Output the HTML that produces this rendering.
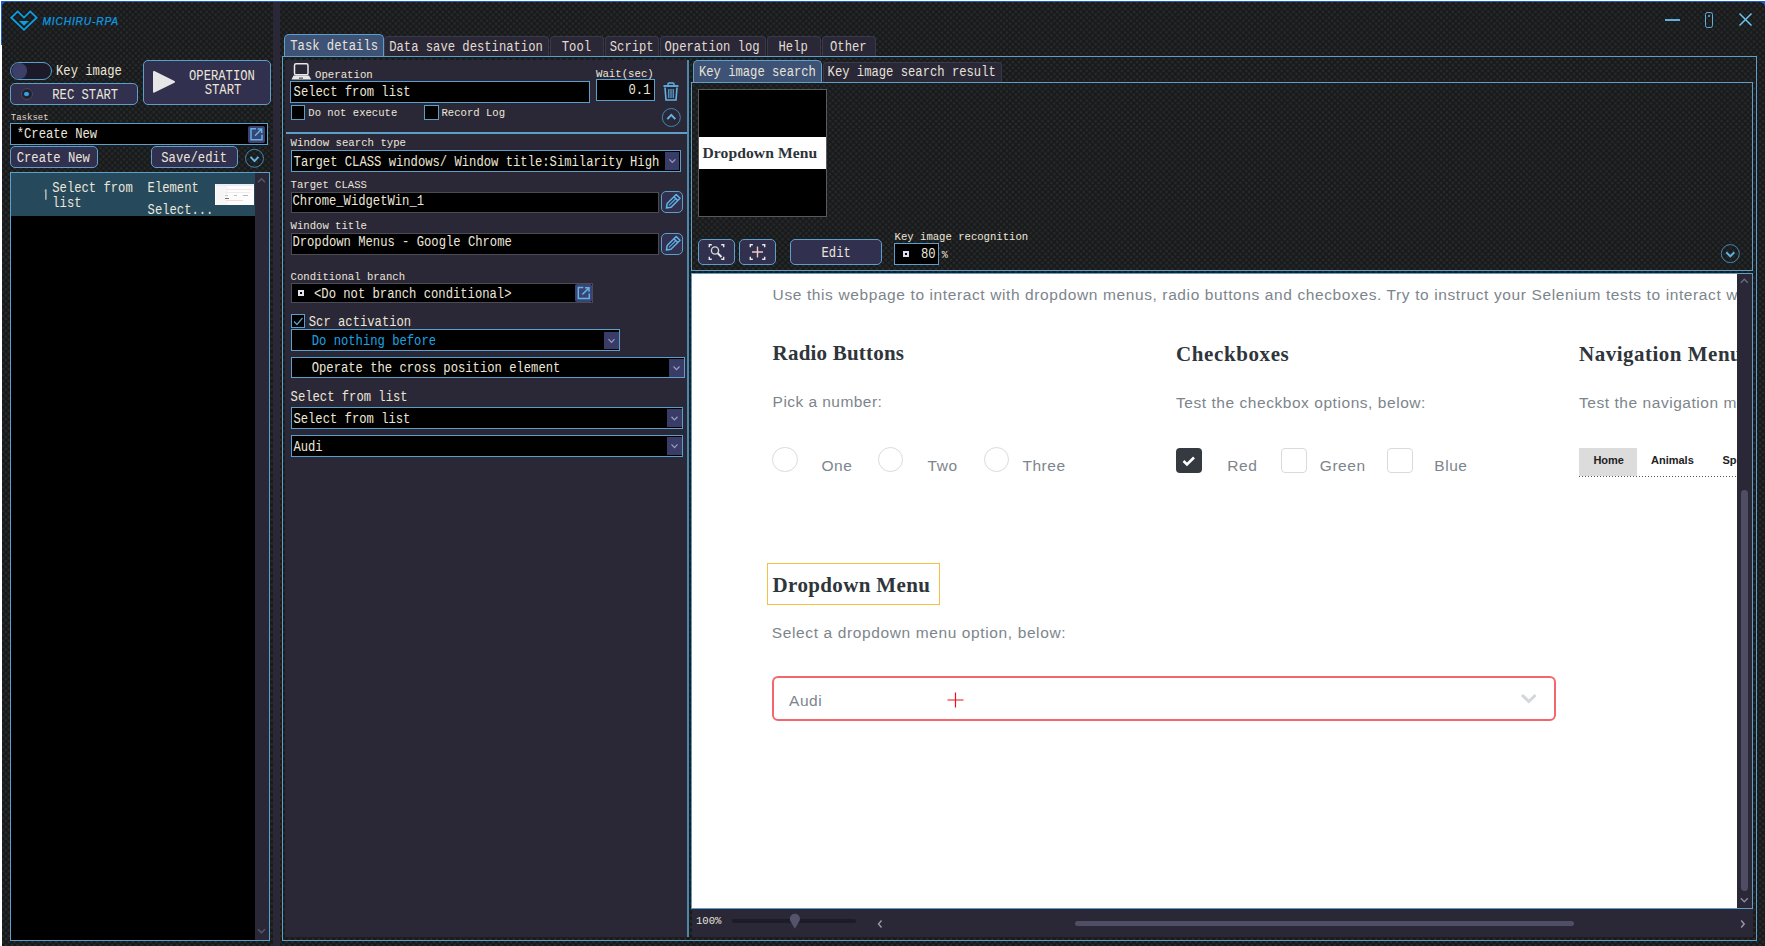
<!DOCTYPE html>
<html><head><meta charset="utf-8">
<style>
*{box-sizing:border-box;margin:0;padding:0}
html,body{width:1765px;height:946px;overflow:hidden}
body{position:relative;background-color:#181818;
background-image:radial-gradient(circle at 2.96px 2.96px,#272b2e 0,#262a2d 0.9px,rgba(24,24,24,0) 2px),radial-gradient(circle at 2.96px 2.96px,#272b2e 0,#262a2d 0.9px,rgba(24,24,24,0) 2px);
background-size:5.92px 5.92px,5.92px 5.92px;background-position:0 0,2.96px 2.96px;
font-family:"Liberation Mono",monospace;color:#ece6da}
.a{position:absolute}
svg.a{overflow:visible}
</style></head><body>
<div class="a" style="left:0px;top:0px;width:1765px;height:1px;background:#fff"></div>
<div class="a" style="left:0px;top:1px;width:1765px;height:1px;background:#1b5ccf"></div>
<div class="a" style="left:0px;top:0px;width:1px;height:946px;background:#fff"></div>
<div class="a" style="left:1px;top:45px;width:1px;height:901px;background:#fff"></div>
<div class="a" style="left:1px;top:1px;width:1px;height:44px;background:#1b5ccf"></div>
<svg class="a" style="left:2px;top:2px" width="6" height="6" viewBox="2 2 6 6"><path d="M2 2 L6.5 2 A4.5 4.5 0 0 0 2 6.5 Z" fill="#1b5ccf"/></svg>
<svg class="a" style="left:1757px;top:2px" width="8" height="8" viewBox="1757 2 8 8"><path d="M1765 2 L1759.5 2 A5.5 5.5 0 0 1 1765 7.5 Z" fill="#1b5ccf"/></svg>
<svg class="a" style="left:9px;top:9px" width="30" height="24" viewBox="0 0 30 24">
<path d="M2.3 8.7 L8.7 2.4 L15 8.6 L21.3 2.4 L27.7 8.7 L15 20.8 Z" fill="none" stroke="#0c9fe6" stroke-width="1.8" stroke-linejoin="miter"/>
<path d="M10 12 L20 12 L15 16.8 Z" fill="#0c9fe6"/>
</svg>
<div class="a" style="left:42.50px;top:16px;font-family:'Liberation Sans',sans-serif;font-size:10.2px;line-height:11px;color:#0c9be2;white-space:pre;font-style:italic;letter-spacing:0.85px;-webkit-text-stroke:0.25px #0c9be2">MICHIRU-RPA</div>
<div class="a" style="left:1665px;top:18.5px;width:15px;height:2.0px;background:#5fb0df"></div>
<div class="a" style="left:1704.5px;top:12px;width:8.5px;height:15.5px;border:1.5px solid #5fb0df;border-radius:2.5px"></div>
<div class="a" style="left:1707.5px;top:14.5px;width:2.5px;height:2.5px;background:#5fb0df;border-radius:1px"></div>
<svg class="a" style="left:1738px;top:12px" width="15" height="15" viewBox="0 0 15 15"><path d="M1.5 1.5 L13.5 13.5 M13.5 1.5 L1.5 13.5" stroke="#6cc3ef" stroke-width="1.5"/></svg>
<div class="a" style="left:273px;top:2px;width:7px;height:944px;background:#2a2837"></div>
<div class="a" style="left:10px;top:61.5px;width:42px;height:18.5px;border:1.5px solid #5c9fca;border-radius:9.5px;background:#1c1a28"></div>
<div class="a" style="left:11.5px;top:63px;width:15.5px;height:15.5px;border-radius:50%;background:#3c4069"></div>
<div class="a" style="left:56.00px;top:65px;font-family:'Liberation Mono',monospace;font-size:12.2px;line-height:14px;color:#ece6da;white-space:pre;transform:scaleY(1.17);transform-origin:0 10px;">Key image</div>
<div class="a" style="left:10px;top:83px;width:128px;height:22px;border:1.5px solid #5c9fca;border-radius:5px;background:#31304e"></div>
<div class="a" style="left:20.5px;top:87.7px;width:12.2px;height:12.2px;border-radius:50%;border:1.5px solid #4a4a55;background:#232233"></div>
<div class="a" style="left:24.3px;top:91.5px;width:4.6px;height:4.6px;border-radius:50%;background:#2fa6e8"></div>
<div class="a" style="left:52.30px;top:89px;font-family:'Liberation Mono',monospace;font-size:12.2px;line-height:14px;color:#ece6da;white-space:pre;transform:scaleY(1.17);transform-origin:0 10px;">REC START</div>
<div class="a" style="left:143px;top:60px;width:128px;height:45px;border:1.5px solid #5c9fca;border-radius:5px;background:#31304e"></div>
<svg class="a" style="left:150px;top:68px" width="30" height="28" viewBox="150 68 30 28"><path d="M154 72 L174 81.8 L154 91.7 Z" fill="#e6e6e8" stroke="#e6e6e8" stroke-width="2" stroke-linejoin="round"/></svg>
<div class="a" style="left:189.00px;top:70px;font-family:'Liberation Mono',monospace;font-size:12.2px;line-height:14px;color:#ece6da;white-space:pre;transform:scaleY(1.17);transform-origin:0 10px;">OPERATION</div>
<div class="a" style="left:204.70px;top:84px;font-family:'Liberation Mono',monospace;font-size:12.2px;line-height:14px;color:#ece6da;white-space:pre;transform:scaleY(1.17);transform-origin:0 10px;">START</div>
<div class="a" style="left:10.80px;top:113px;font-family:'Liberation Mono',monospace;font-size:9px;line-height:10px;color:#e0d8cc;white-space:pre;">Taskset</div>
<div class="a" style="left:10px;top:123px;width:258px;height:22px;border:1px solid #5c9fca;background:#000"></div>
<div class="a" style="left:16.70px;top:128px;font-family:'Liberation Mono',monospace;font-size:12.2px;line-height:14px;color:#ece6da;white-space:pre;transform:scaleY(1.17);transform-origin:0 10px;">*Create New</div>
<div class="a" style="left:248px;top:126px;width:17px;height:16.5px;background:#3b4373;border-radius:2px"></div>
<svg class="a" style="left:248px;top:126px" width="17" height="16.5" viewBox="248 126 17 16.5"><path d="M256.0 128.75 L251.0 128.75 L251.0 139.75 L262.0 139.75 L262.0 134.75" fill="none" stroke="#5fb3e6" stroke-width="1.5"/><path d="M255.0 135.75 L261.7 129.05 M257.7 129.05 L261.7 129.05 L261.7 133.05" fill="none" stroke="#5fb3e6" stroke-width="1.5"/></svg>
<div class="a" style="left:10px;top:146px;width:88px;height:22px;border:1.5px solid #5c9fca;border-radius:5px;background:#31304e"></div>
<div class="a" style="left:16.70px;top:152px;font-family:'Liberation Mono',monospace;font-size:12.2px;line-height:14px;color:#ece6da;white-space:pre;transform:scaleY(1.17);transform-origin:0 10px;">Create New</div>
<div class="a" style="left:151px;top:146px;width:87px;height:22px;border:1.5px solid #5c9fca;border-radius:5px;background:#31304e"></div>
<div class="a" style="left:161.30px;top:152px;font-family:'Liberation Mono',monospace;font-size:12.2px;line-height:14px;color:#ece6da;white-space:pre;transform:scaleY(1.17);transform-origin:0 10px;">Save/edit</div>
<svg class="a" style="left:244px;top:148px" width="21" height="21" viewBox="244 148 21 21"><circle cx="254.5" cy="158.3" r="9" fill="none" stroke="#3f87b3" stroke-width="1"/><path d="M250.5 156.9 L254.5 161.1 L258.5 156.9" fill="none" stroke="#5fb3e6" stroke-width="2"/></svg>
<div class="a" style="left:10px;top:172px;width:260px;height:769px;border:1px solid #5c9fca;background:#000"></div>
<div class="a" style="left:255px;top:173px;width:14px;height:767px;background:#2a2837"></div>
<svg class="a" style="left:255px;top:173px" width="14" height="17" viewBox="255 173 14 17"><path d="M258.0 182.25 L261.5 178.75 L265.0 182.25" fill="none" stroke="#5a5870" stroke-width="1.3"/></svg>
<svg class="a" style="left:255px;top:920px" width="14" height="20" viewBox="255 920 14 20"><path d="M258.0 929.25 L261.5 932.75 L265.0 929.25" fill="none" stroke="#5a5870" stroke-width="1.3"/></svg>
<div class="a" style="left:11px;top:173px;width:244px;height:43px;background:#264a5c"></div>
<svg class="a" style="left:42px;top:187px" width="8" height="15" viewBox="42 187 8 15"><path d="M45.9 189.5 L45.9 199.8" stroke="#e8e4dc" stroke-width="1.1"/><path d="M44.6 191.2 L45.9 189.6" stroke="#c8c4bc" stroke-width="0.8"/></svg>
<div class="a" style="left:52.30px;top:182px;font-family:'Liberation Mono',monospace;font-size:12.2px;line-height:14px;color:#ece6da;white-space:pre;transform:scaleY(1.17);transform-origin:0 10px;">Select from</div>
<div class="a" style="left:52.30px;top:197px;font-family:'Liberation Mono',monospace;font-size:12.2px;line-height:14px;color:#ece6da;white-space:pre;transform:scaleY(1.17);transform-origin:0 10px;">list</div>
<div class="a" style="left:147.60px;top:182px;font-family:'Liberation Mono',monospace;font-size:12.2px;line-height:14px;color:#ece6da;white-space:pre;transform:scaleY(1.17);transform-origin:0 10px;">Element</div>
<div class="a" style="left:147.60px;top:204px;font-family:'Liberation Mono',monospace;font-size:12.2px;line-height:14px;color:#ece6da;white-space:pre;transform:scaleY(1.17);transform-origin:0 10px;">Select...</div>
<div class="a" style="left:215px;top:184px;width:39px;height:21px;background:#fdfdfd"></div>
<div class="a" style="left:216px;top:184px;width:38px;height:1.5px;background:#e8eef8"></div>
<div class="a" style="left:216px;top:186px;width:12px;height:19px;background:#f6f6f7"></div>
<div class="a" style="left:225.5px;top:188.5px;width:26.0px;height:1.5px;background:#fbe3e3"></div>
<div class="a" style="left:225px;top:191.5px;width:25px;height:0.8000000000000114px;background:#ececec"></div>
<div class="a" style="left:225px;top:195.2px;width:3px;height:0.8000000000000114px;background:#c8c8c8"></div>
<div class="a" style="left:234px;top:195.2px;width:3px;height:0.8000000000000114px;background:#c0c0c0"></div>
<div class="a" style="left:243px;top:195.2px;width:5px;height:0.8000000000000114px;background:#b8b8b8"></div>
<div class="a" style="left:225px;top:198px;width:4px;height:1px;background:#777"></div>
<div class="a" style="left:225.5px;top:200.2px;width:17.5px;height:1.0px;background:#fbd9d9"></div>
<div class="a" style="left:284px;top:34px;width:99.5px;height:23px;border:1.5px solid #5c9fca;border-bottom:none;border-radius:5px 5px 0 0;background:#3e5275"></div>
<div class="a" style="left:290.30px;top:40px;font-family:'Liberation Mono',monospace;font-size:12.2px;line-height:14px;color:#e8e4dc;white-space:pre;transform:scaleY(1.17);transform-origin:0 10px;">Task details</div>
<div class="a" style="left:384px;top:36.3px;width:165px;height:20px;border:1px solid #3a394a;border-bottom:none;border-radius:4px 4px 0 0;background:#2a2837"></div>
<div class="a" style="left:389.20px;top:41px;font-family:'Liberation Mono',monospace;font-size:12.2px;line-height:14px;color:#e2dcd2;white-space:pre;transform:scaleY(1.17);transform-origin:0 10px;">Data save destination</div>
<div class="a" style="left:550px;top:36.3px;width:53.5px;height:20px;border:1px solid #3a394a;border-bottom:none;border-radius:4px 4px 0 0;background:#2a2837"></div>
<div class="a" style="left:561.80px;top:41px;font-family:'Liberation Mono',monospace;font-size:12.2px;line-height:14px;color:#e2dcd2;white-space:pre;transform:scaleY(1.17);transform-origin:0 10px;">Tool</div>
<div class="a" style="left:604.5px;top:36.3px;width:54.5px;height:20px;border:1px solid #3a394a;border-bottom:none;border-radius:4px 4px 0 0;background:#2a2837"></div>
<div class="a" style="left:609.80px;top:41px;font-family:'Liberation Mono',monospace;font-size:12.2px;line-height:14px;color:#e2dcd2;white-space:pre;transform:scaleY(1.17);transform-origin:0 10px;">Script</div>
<div class="a" style="left:660px;top:36.3px;width:105.5px;height:20px;border:1px solid #3a394a;border-bottom:none;border-radius:4px 4px 0 0;background:#2a2837"></div>
<div class="a" style="left:664.50px;top:41px;font-family:'Liberation Mono',monospace;font-size:12.2px;line-height:14px;color:#e2dcd2;white-space:pre;transform:scaleY(1.17);transform-origin:0 10px;">Operation log</div>
<div class="a" style="left:766.5px;top:36.3px;width:54.0px;height:20px;border:1px solid #3a394a;border-bottom:none;border-radius:4px 4px 0 0;background:#2a2837"></div>
<div class="a" style="left:778.50px;top:41px;font-family:'Liberation Mono',monospace;font-size:12.2px;line-height:14px;color:#e2dcd2;white-space:pre;transform:scaleY(1.17);transform-origin:0 10px;">Help</div>
<div class="a" style="left:821.5px;top:36.3px;width:54.0px;height:20px;border:1px solid #3a394a;border-bottom:none;border-radius:4px 4px 0 0;background:#2a2837"></div>
<div class="a" style="left:830.00px;top:41px;font-family:'Liberation Mono',monospace;font-size:12.2px;line-height:14px;color:#e2dcd2;white-space:pre;transform:scaleY(1.17);transform-origin:0 10px;">Other</div>
<div class="a" style="left:282px;top:56px;width:1475px;height:885px;border:1px solid #5c9fca"></div>
<div class="a" style="left:285px;top:60px;width:403px;height:877px;background:#2a2837"></div>
<div class="a" style="left:687px;top:60px;width:2px;height:877px;background:#4e87a9"></div>
<svg class="a" style="left:290px;top:62px" width="23" height="19" viewBox="290 62 23 19"><rect x="294.5" y="63.8" width="13.5" height="11" rx="1.6" fill="none" stroke="#e8e8e8" stroke-width="1.5"/><path d="M293.5 75.5 L309 75.5 L311.2 79.5 L291.5 79.5 Z" fill="#e8e8e8"/><rect x="299" y="77.6" width="4" height="1" fill="#333"/></svg>
<div class="a" style="left:315.00px;top:69px;font-family:'Liberation Mono',monospace;font-size:10.7px;line-height:12px;color:#ece6da;white-space:pre;">Operation</div>
<div class="a" style="left:596.00px;top:68px;font-family:'Liberation Mono',monospace;font-size:10.7px;line-height:12px;color:#ece6da;white-space:pre;">Wait(sec)</div>
<div class="a" style="left:290px;top:81px;width:300px;height:22px;border:1px solid #5c9fca;background:#000"></div>
<div class="a" style="left:293.60px;top:86px;font-family:'Liberation Mono',monospace;font-size:12.2px;line-height:14px;color:#ece6da;white-space:pre;transform:scaleY(1.17);transform-origin:0 10px;">Select from list</div>
<div class="a" style="left:596px;top:79.3px;width:58.5px;height:21.700000000000003px;border:1px solid #5c9fca;background:#000"></div>
<div class="a" style="right:1114.50px;top:84px;font-family:'Liberation Mono',monospace;font-size:12.2px;line-height:14px;color:#ece6da;white-space:pre;transform:scaleY(1.17);transform-origin:0 10px;">0.1</div>
<svg class="a" style="left:660px;top:80px" width="22" height="23" viewBox="660 80 22 23"><path d="M663.5 86 L678.5 86" stroke="#5fb3e6" stroke-width="1.8"/><path d="M668 86 L668 83.8 Q668 83 669 83 L673 83 Q674 83 674 83.8 L674 86" fill="none" stroke="#5fb3e6" stroke-width="1.4"/><path d="M665 87.5 L666 100 L676 100 L677 87.5" fill="none" stroke="#5fb3e6" stroke-width="1.6"/><path d="M668.8 89 L668.8 98 M671 89 L671 98 M673.2 89 L673.2 98" stroke="#5fb3e6" stroke-width="1.1"/></svg>
<div class="a" style="left:290.5px;top:104.8px;width:14.699999999999989px;height:14.799999999999997px;border:1.5px solid #5c9fca;background:#000"></div>
<div class="a" style="left:308.30px;top:107px;font-family:'Liberation Mono',monospace;font-size:10.6px;line-height:12px;color:#ece6da;white-space:pre;">Do not execute</div>
<div class="a" style="left:424px;top:104.8px;width:14.699999999999989px;height:14.799999999999997px;border:1.5px solid #5c9fca;background:#000"></div>
<div class="a" style="left:441.50px;top:107px;font-family:'Liberation Mono',monospace;font-size:10.6px;line-height:12px;color:#ece6da;white-space:pre;">Record Log</div>
<svg class="a" style="left:660px;top:106px" width="23" height="23" viewBox="660 106 23 23"><circle cx="671.3" cy="117.5" r="9" fill="none" stroke="#3f87b3" stroke-width="1"/><path d="M667.3 119.1 L671.3 114.9 L675.3 119.1" fill="none" stroke="#5fb3e6" stroke-width="2"/></svg>
<div class="a" style="left:286px;top:132.3px;width:401px;height:1.5px;background:#5c9fca"></div>
<div class="a" style="left:290.60px;top:137px;font-family:'Liberation Mono',monospace;font-size:10.7px;line-height:12px;color:#ece6da;white-space:pre;">Window search type</div>
<div class="a" style="left:290.6px;top:150.3px;width:390.4px;height:21.299999999999983px;border:1px solid #5c9fca;background:#000"></div>
<div class="a" style="left:293.60px;top:156px;font-family:'Liberation Mono',monospace;font-size:12.2px;line-height:14px;color:#ece6da;white-space:pre;transform:scaleY(1.17);transform-origin:0 10px;">Target CLASS windows/ Window title:Similarity High</div>
<div class="a" style="left:664.8px;top:152px;width:14.700000000000045px;height:17.80000000000001px;background:#393c66"></div>
<svg class="a" style="left:664.8px;top:152px" width="14.700000000000045" height="17.80000000000001" viewBox="664.8 152 14.700000000000045 17.80000000000001"><path d="M669.15 159.3 L672.15 162.5 L675.15 159.3" fill="none" stroke="#9a9cc0" stroke-width="1.2"/></svg>
<div class="a" style="left:290.60px;top:179px;font-family:'Liberation Mono',monospace;font-size:10.6px;line-height:12px;color:#ece6da;white-space:pre;">Target CLASS</div>
<div class="a" style="left:290.8px;top:191.6px;width:367.8px;height:21.599999999999994px;border:1px solid #4b4b55;background:#000"></div>
<div class="a" style="left:292.40px;top:195px;font-family:'Liberation Mono',monospace;font-size:12.2px;line-height:14px;color:#ece6da;white-space:pre;transform:scaleY(1.17);transform-origin:0 10px;">Chrome_WidgetWin_1</div>
<div class="a" style="left:661px;top:191px;width:22.200000000000045px;height:22.400000000000006px;border:1.5px solid #5c9fca;border-radius:5px;background:#31304e"></div>
<svg class="a" style="left:661px;top:191px" width="22.200000000000045" height="22.400000000000006" viewBox="661 191 22.200000000000045 22.400000000000006"><g transform="translate(672.3000000000001 202.2) rotate(-45)"><path d="M-8.3 0 L-4.6 -2.7 L8.2 -2.7 L8.2 2.7 L-4.6 2.7 Z" fill="none" stroke="#5fb3e6" stroke-width="1.5" stroke-linejoin="round"/><path d="M5 -2.7 L5 2.7" stroke="#5fb3e6" stroke-width="1.5"/><path d="M-4.6 0 L5 0" stroke="#5fb3e6" stroke-width="1"/><path d="M-8.3 0 L-6.6 -1.2 L-6.6 1.2 Z" fill="#5fb3e6"/></g></svg>
<div class="a" style="left:290.60px;top:220px;font-family:'Liberation Mono',monospace;font-size:10.6px;line-height:12px;color:#ece6da;white-space:pre;">Window title</div>
<div class="a" style="left:290.8px;top:233px;width:367.8px;height:21.599999999999994px;border:1px solid #4b4b55;background:#000"></div>
<div class="a" style="left:292.40px;top:236px;font-family:'Liberation Mono',monospace;font-size:12.2px;line-height:14px;color:#ece6da;white-space:pre;transform:scaleY(1.17);transform-origin:0 10px;">Dropdown Menus - Google Chrome</div>
<div class="a" style="left:661px;top:232.5px;width:22.200000000000045px;height:22.30000000000001px;border:1.5px solid #5c9fca;border-radius:5px;background:#31304e"></div>
<svg class="a" style="left:661px;top:232.5px" width="22.200000000000045" height="22.30000000000001" viewBox="661 232.5 22.200000000000045 22.30000000000001"><g transform="translate(672.3000000000001 243.65) rotate(-45)"><path d="M-8.3 0 L-4.6 -2.7 L8.2 -2.7 L8.2 2.7 L-4.6 2.7 Z" fill="none" stroke="#5fb3e6" stroke-width="1.5" stroke-linejoin="round"/><path d="M5 -2.7 L5 2.7" stroke="#5fb3e6" stroke-width="1.5"/><path d="M-4.6 0 L5 0" stroke="#5fb3e6" stroke-width="1"/><path d="M-8.3 0 L-6.6 -1.2 L-6.6 1.2 Z" fill="#5fb3e6"/></g></svg>
<div class="a" style="left:290.60px;top:271px;font-family:'Liberation Mono',monospace;font-size:10.6px;line-height:12px;color:#ece6da;white-space:pre;">Conditional branch</div>
<div class="a" style="left:290.8px;top:283.2px;width:302.59999999999997px;height:20.100000000000023px;border:1px solid #4b4b55;background:#000"></div>
<div class="a" style="left:297.5px;top:290px;width:6.300000000000011px;height:6.300000000000011px;border:2px solid #e4e4ee"></div>
<div class="a" style="left:314.00px;top:288px;font-family:'Liberation Mono',monospace;font-size:12.2px;line-height:14px;color:#ece6da;white-space:pre;transform:scaleY(1.17);transform-origin:0 10px;">&lt;Do not branch conditional&gt;</div>
<div class="a" style="left:574.8px;top:284.2px;width:17.600000000000023px;height:18.100000000000023px;background:#3b4373;border-radius:2px"></div>
<svg class="a" style="left:574.8px;top:284.2px" width="17.600000000000023" height="18.100000000000023" viewBox="574.8 284.2 17.600000000000023 18.100000000000023"><path d="M583.0999999999999 287.75 L578.0999999999999 287.75 L578.0999999999999 298.75 L589.0999999999999 298.75 L589.0999999999999 293.75" fill="none" stroke="#5fb3e6" stroke-width="1.5"/><path d="M582.0999999999999 294.75 L588.8 288.05 M584.8 288.05 L588.8 288.05 L588.8 292.05" fill="none" stroke="#5fb3e6" stroke-width="1.5"/></svg>
<div class="a" style="left:290.6px;top:313.6px;width:14.5px;height:14.199999999999989px;border:1.5px solid #5c9fca;background:#000"></div>
<svg class="a" style="left:290.6px;top:313.6px" width="14.5" height="14.199999999999989" viewBox="290.6 313.6 14.5 14.199999999999989"><path d="M293.6 321.1 L296.6 324.1 L302.1 317.6" fill="none" stroke="#5c9fca" stroke-width="1.3"/></svg>
<div class="a" style="left:308.80px;top:316px;font-family:'Liberation Mono',monospace;font-size:12.2px;line-height:14px;color:#ece6da;white-space:pre;transform:scaleY(1.17);transform-origin:0 10px;">Scr activation</div>
<div class="a" style="left:290.6px;top:329.3px;width:329.9px;height:21.599999999999966px;border:1px solid #5c9fca;background:#000"></div>
<div class="a" style="left:311.70px;top:335px;font-family:'Liberation Mono',monospace;font-size:12.2px;line-height:14px;color:#1aa3e0;white-space:pre;transform:scaleY(1.17);transform-origin:0 10px;">Do nothing before</div>
<div class="a" style="left:604px;top:331.5px;width:15px;height:17.5px;background:#393c66"></div>
<svg class="a" style="left:604px;top:331.5px" width="15" height="17.5" viewBox="604 331.5 15 17.5"><path d="M608.5 338.65 L611.5 341.85 L614.5 338.65" fill="none" stroke="#9a9cc0" stroke-width="1.2"/></svg>
<div class="a" style="left:290.6px;top:357.1px;width:394.19999999999993px;height:21.399999999999977px;border:1px solid #5c9fca;background:#000"></div>
<div class="a" style="left:311.70px;top:362px;font-family:'Liberation Mono',monospace;font-size:12.2px;line-height:14px;color:#ece6da;white-space:pre;transform:scaleY(1.17);transform-origin:0 10px;">Operate the cross position element</div>
<div class="a" style="left:668.5px;top:358.8px;width:15.0px;height:18.19999999999999px;background:#393c66"></div>
<svg class="a" style="left:668.5px;top:358.8px" width="15.0" height="18.19999999999999" viewBox="668.5 358.8 15.0 18.19999999999999"><path d="M673.0 366.29999999999995 L676.0 369.5 L679.0 366.29999999999995" fill="none" stroke="#9a9cc0" stroke-width="1.2"/></svg>
<div class="a" style="left:290.60px;top:391px;font-family:'Liberation Mono',monospace;font-size:12.2px;line-height:14px;color:#ece6da;white-space:pre;transform:scaleY(1.17);transform-origin:0 10px;">Select from list</div>
<div class="a" style="left:290.6px;top:407px;width:392.19999999999993px;height:22.30000000000001px;border:1px solid #5c9fca;background:#000"></div>
<div class="a" style="left:293.40px;top:413px;font-family:'Liberation Mono',monospace;font-size:12.2px;line-height:14px;color:#ece6da;white-space:pre;transform:scaleY(1.17);transform-origin:0 10px;">Select from list</div>
<div class="a" style="left:666.5px;top:408.8px;width:15.0px;height:18.69999999999999px;background:#393c66"></div>
<svg class="a" style="left:666.5px;top:408.8px" width="15.0" height="18.69999999999999" viewBox="666.5 408.8 15.0 18.69999999999999"><path d="M671.0 416.54999999999995 L674.0 419.75 L677.0 416.54999999999995" fill="none" stroke="#9a9cc0" stroke-width="1.2"/></svg>
<div class="a" style="left:290.6px;top:435.2px;width:392.19999999999993px;height:21.5px;border:1px solid #5c9fca;background:#000"></div>
<div class="a" style="left:293.40px;top:441px;font-family:'Liberation Mono',monospace;font-size:12.2px;line-height:14px;color:#ece6da;white-space:pre;transform:scaleY(1.17);transform-origin:0 10px;">Audi</div>
<div class="a" style="left:666.5px;top:437px;width:15.0px;height:18px;background:#393c66"></div>
<svg class="a" style="left:666.5px;top:437px" width="15.0" height="18" viewBox="666.5 437 15.0 18"><path d="M671.0 444.4 L674.0 447.6 L677.0 444.4" fill="none" stroke="#9a9cc0" stroke-width="1.2"/></svg>
<div class="a" style="left:693px;top:60.3px;width:129px;height:22.700000000000003px;border:1.5px solid #5c9fca;border-bottom:none;border-radius:5px 5px 0 0;background:#3e5275"></div>
<div class="a" style="left:698.90px;top:66px;font-family:'Liberation Mono',monospace;font-size:12.2px;line-height:14px;color:#e6e2da;white-space:pre;transform:scaleY(1.17);transform-origin:0 10px;">Key image search</div>
<div class="a" style="left:822.5px;top:62.3px;width:179.5px;height:20.700000000000003px;border:1px solid #3a394a;border-bottom:none;border-radius:4px 4px 0 0;background:#2a2837"></div>
<div class="a" style="left:827.60px;top:66px;font-family:'Liberation Mono',monospace;font-size:12.2px;line-height:14px;color:#e6e2da;white-space:pre;transform:scaleY(1.17);transform-origin:0 10px;">Key image search result</div>
<div class="a" style="left:691px;top:82px;width:1062px;height:188.5px;border:1px solid #5c9fca;border-bottom-width:1.5px"></div>
<div class="a" style="left:698px;top:88.5px;width:128.5px;height:128.3px;border:1px solid #5a5a5e;background:#000"></div>
<div class="a" style="left:699px;top:137px;width:126.5px;height:31.5px;background:#fff"></div>
<div class="a" style="left:702.40px;top:144px;font-family:'Liberation Serif',serif;font-size:15.6px;line-height:17px;color:#2d3338;white-space:pre;font-weight:bold;letter-spacing:0.1px">Dropdown Menu</div>
<div class="a" style="left:698px;top:239.3px;width:37px;height:25.5px;border:1.5px solid #5c9fca;border-radius:5px;background:#31304e"></div>
<div class="a" style="left:739px;top:239.3px;width:37px;height:25.5px;border:1.5px solid #5c9fca;border-radius:5px;background:#31304e"></div>
<svg class="a" style="left:698px;top:239px" width="37" height="26" viewBox="698 239 37 26"><path d="M711.8 244.8 L709.3 244.8 L709.3 247.3 M711.8 259.2 L709.3 259.2 L709.3 256.7 M721.2 244.8 L723.7 244.8 L723.7 247.3 M721.2 259.2 L723.7 259.2 L723.7 256.7 " fill="none" stroke="#e8e8e8" stroke-width="1.4"/><circle cx="715" cy="250.5" r="3.6" fill="none" stroke="#d8d8d8" stroke-width="1.4"/><path d="M717.8 253.3 L721.5 257" stroke="#e8e8e8" stroke-width="2"/></svg>
<svg class="a" style="left:739px;top:239px" width="37" height="26" viewBox="739 239 37 26"><path d="M752.8 244.8 L750.3 244.8 L750.3 247.3 M752.8 259.2 L750.3 259.2 L750.3 256.7 M762.2 244.8 L764.7 244.8 L764.7 247.3 M762.2 259.2 L764.7 259.2 L764.7 256.7 " fill="none" stroke="#e8e8e8" stroke-width="1.4"/><path d="M757.5 246.5 L757.5 257.5 M752 252 L763 252" stroke="#f0c8c4" stroke-width="1.4"/></svg>
<div class="a" style="left:789.9px;top:239.3px;width:91.80000000000007px;height:25.5px;border:1.5px solid #5c9fca;border-radius:5px;background:#31304e"></div>
<div class="a" style="left:821.50px;top:247px;font-family:'Liberation Mono',monospace;font-size:12.2px;line-height:14px;color:#ece6da;white-space:pre;transform:scaleY(1.17);transform-origin:0 10px;">Edit</div>
<div class="a" style="left:894.60px;top:231px;font-family:'Liberation Mono',monospace;font-size:10.6px;line-height:12px;color:#ece6da;white-space:pre;">Key image recognition</div>
<div class="a" style="left:894.3px;top:243.1px;width:44.5px;height:21.700000000000017px;border:1px solid #5c9fca;background:#000"></div>
<div class="a" style="left:902.8px;top:251px;width:5.800000000000068px;height:5.800000000000011px;border:2px solid #dcdcee"></div>
<div class="a" style="right:829.40px;top:248px;font-family:'Liberation Mono',monospace;font-size:12.2px;line-height:14px;color:#ece6da;white-space:pre;transform:scaleY(1.17);transform-origin:0 10px;">80</div>
<div class="a" style="left:941.80px;top:250px;font-family:'Liberation Mono',monospace;font-size:10px;line-height:11px;color:#ece6da;white-space:pre;">%</div>
<svg class="a" style="left:1719px;top:242px" width="23" height="24" viewBox="1719 242 23 24"><circle cx="1730.3" cy="253.6" r="9" fill="none" stroke="#3f87b3" stroke-width="1"/><path d="M1726.3 252.20000000000002 L1730.3 256.40000000000003 L1734.3 252.20000000000002" fill="none" stroke="#5fb3e6" stroke-width="2"/></svg>
<div class="a" style="left:691px;top:273px;width:1062px;height:636px;border:1px solid #5c9fca"></div>
<div class="a" style="left:692px;top:274px;width:1045px;height:634px;background:#fff"></div>
<div class="a" style="left:692px;top:274px;width:1045px;height:634px;overflow:hidden">
<div class="a" style="left:80.60px;top:12px;font-family:'Liberation Sans',sans-serif;font-size:15.5px;line-height:17px;color:#7d858c;white-space:pre;letter-spacing:0.61px">Use this webpage to interact with dropdown menus, radio buttons and checboxes. Try to instruct your Selenium tests to interact with these elements.</div>
<div class="a" style="left:80.60px;top:67px;font-family:'Liberation Serif',serif;font-size:21px;line-height:24px;color:#2f353b;white-space:pre;font-weight:bold;letter-spacing:0.2px">Radio Buttons</div>
<div class="a" style="left:80.60px;top:119px;font-family:'Liberation Sans',sans-serif;font-size:15.5px;line-height:17px;color:#7d858c;white-space:pre;letter-spacing:0.45px">Pick a number:</div>
<div class="a" style="left:80.40px;top:173.00px;width:25.40px;height:25.40px;border:1px solid #d8dbde;border-radius:50%"></div>
<div class="a" style="left:129.50px;top:183px;font-family:'Liberation Sans',sans-serif;font-size:15.5px;line-height:17px;color:#7d858c;white-space:pre;letter-spacing:0.55px">One</div>
<div class="a" style="left:186.10px;top:173.00px;width:25.40px;height:25.40px;border:1px solid #d8dbde;border-radius:50%"></div>
<div class="a" style="left:235.60px;top:183px;font-family:'Liberation Sans',sans-serif;font-size:15.5px;line-height:17px;color:#7d858c;white-space:pre;letter-spacing:0.55px">Two</div>
<div class="a" style="left:292.00px;top:173.00px;width:25.40px;height:25.40px;border:1px solid #d8dbde;border-radius:50%"></div>
<div class="a" style="left:330.40px;top:183px;font-family:'Liberation Sans',sans-serif;font-size:15.5px;line-height:17px;color:#7d858c;white-space:pre;letter-spacing:0.55px">Three</div>
<div class="a" style="left:484.00px;top:68px;font-family:'Liberation Serif',serif;font-size:21px;line-height:24px;color:#2f353b;white-space:pre;font-weight:bold;letter-spacing:0.6px">Checkboxes</div>
<div class="a" style="left:484.00px;top:120px;font-family:'Liberation Sans',sans-serif;font-size:15.5px;line-height:17px;color:#7d858c;white-space:pre;letter-spacing:0.55px">Test the checkbox options, below:</div>
<div class="a" style="left:484.00px;top:173.50px;width:25.50px;height:25.50px;background:#343a40;border-radius:4px"></div>
<svg class="a" style="left:484px;top:173.5px" width="26" height="26"><path d="M7.5 13 L11 16.5 L18 9.5" fill="none" stroke="#fff" stroke-width="2.6"/></svg>
<div class="a" style="left:535.30px;top:183px;font-family:'Liberation Sans',sans-serif;font-size:15.5px;line-height:17px;color:#7d858c;white-space:pre;letter-spacing:0.55px">Red</div>
<div class="a" style="left:589.30px;top:173.50px;width:25.50px;height:25.50px;border:1px solid #d8dbde;border-radius:4px"></div>
<div class="a" style="left:627.80px;top:183px;font-family:'Liberation Sans',sans-serif;font-size:15.5px;line-height:17px;color:#7d858c;white-space:pre;letter-spacing:0.55px">Green</div>
<div class="a" style="left:695.00px;top:173.50px;width:25.50px;height:25.50px;border:1px solid #d8dbde;border-radius:4px"></div>
<div class="a" style="left:742.30px;top:183px;font-family:'Liberation Sans',sans-serif;font-size:15.5px;line-height:17px;color:#7d858c;white-space:pre;letter-spacing:0.55px">Blue</div>
<div class="a" style="left:887.00px;top:68px;font-family:'Liberation Serif',serif;font-size:21px;line-height:24px;color:#2f353b;white-space:pre;font-weight:bold;letter-spacing:0.5px">Navigation Menu</div>
<div class="a" style="left:887.00px;top:120px;font-family:'Liberation Sans',sans-serif;font-size:15.5px;line-height:17px;color:#7d858c;white-space:pre;letter-spacing:0.55px">Test the navigation menu</div>
<div class="a" style="left:887.00px;top:173.50px;width:58.00px;height:28.90px;background:#dcdcdc"></div>
<div class="a" style="left:887.00px;top:202.00px;width:158.00px;height:1.00px;background:repeating-linear-gradient(90deg,#555 0 1px,transparent 1px 3px)"></div>
<div class="a" style="left:901.40px;top:180px;font-family:'Liberation Sans',sans-serif;font-size:11px;line-height:12px;color:#222;white-space:pre;font-weight:bold">Home</div>
<div class="a" style="left:959.00px;top:180px;font-family:'Liberation Sans',sans-serif;font-size:11px;line-height:12px;color:#222;white-space:pre;font-weight:bold">Animals</div>
<div class="a" style="left:1030.50px;top:180px;font-family:'Liberation Sans',sans-serif;font-size:11px;line-height:12px;color:#222;white-space:pre;font-weight:bold">Sports</div>
<div class="a" style="left:74.80px;top:289.00px;width:173.40px;height:42.20px;border:1.5px solid #f5c045"></div>
<div class="a" style="left:80.60px;top:299px;font-family:'Liberation Serif',serif;font-size:21px;line-height:24px;color:#2f353b;white-space:pre;font-weight:bold;letter-spacing:0.35px">Dropdown Menu</div>
<div class="a" style="left:79.80px;top:350px;font-family:'Liberation Sans',sans-serif;font-size:15.5px;line-height:17px;color:#7d858c;white-space:pre;letter-spacing:0.62px">Select a dropdown menu option, below:</div>
<div class="a" style="left:79.80px;top:402.20px;width:783.80px;height:44.60px;border:2px solid #f3666b;border-radius:6px"></div>
<div class="a" style="left:97.00px;top:418px;font-family:'Liberation Sans',sans-serif;font-size:15.5px;line-height:17px;color:#7d858c;white-space:pre;letter-spacing:0.55px">Audi</div>
<svg class="a" style="left:826px;top:416px" width="22" height="18"><path d="M4 5 L10.8 11.5 L17.6 5" fill="none" stroke="#d3d7db" stroke-width="3"/></svg>
<svg class="a" style="left:253px;top:416px" width="22" height="22"><path d="M2.5 10 L18.5 10 M10.5 2.5 L10.5 17.5" fill="none" stroke="#f0101a" stroke-width="1.2"/></svg>
</div>
<div class="a" style="left:1737px;top:274px;width:15px;height:634px;background:#2a2837"></div>
<svg class="a" style="left:1737px;top:274px" width="15" height="16" viewBox="1737 274 15 16"><path d="M1740.8 282.75 L1744.3 279.25 L1747.8 282.75" fill="none" stroke="#6b6a80" stroke-width="1.3"/></svg>
<div class="a" style="left:1741px;top:490px;width:6.7999999999999545px;height:401px;background:#4f4d63;border-radius:3.4px"></div>
<svg class="a" style="left:1737px;top:890px" width="15" height="18" viewBox="1737 890 15 18"><path d="M1740.8 898.25 L1744.3 901.75 L1747.8 898.25" fill="none" stroke="#8d8ca3" stroke-width="1.3"/></svg>
<div class="a" style="left:692px;top:909px;width:1061px;height:28px;background:#2a2837"></div>
<div class="a" style="left:696.00px;top:915px;font-family:'Liberation Mono',monospace;font-size:10.6px;line-height:12px;color:#e6e2da;white-space:pre;">100%</div>
<div class="a" style="left:732px;top:918.7px;width:124px;height:4.2999999999999545px;background:#1d1b29;border-radius:2.2px"></div>
<svg class="a" style="left:785px;top:911px" width="20" height="20" viewBox="785 911 20 20"><path d="M789.8 918.8 A5.1 5.1 0 1 1 800 918.8 Q800 921 798 923.5 L794.9 928.7 L791.8 923.5 Q789.8 921 789.8 918.8 Z" fill="#55536a"/></svg>
<svg class="a" style="left:872px;top:915px" width="16" height="18" viewBox="872 915 16 18"><path d="M881.5 920.5 L878.5 924 L881.5 927.5" fill="none" stroke="#9a98b0" stroke-width="1.4"/></svg>
<div class="a" style="left:1075px;top:920.8px;width:499px;height:5.400000000000091px;background:#504e64;border-radius:2.7px"></div>
<svg class="a" style="left:1736px;top:915px" width="16" height="18" viewBox="1736 915 16 18"><path d="M1741.2 920.5 L1744.2 924 L1741.2 927.5" fill="none" stroke="#9a98b0" stroke-width="1.4"/></svg>
</body></html>
